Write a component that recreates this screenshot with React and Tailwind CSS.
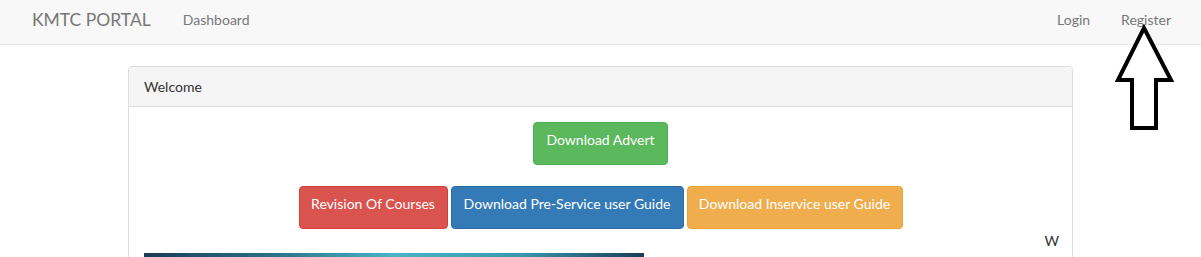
import React from 'react'

function UpArrow() {
  return (
    <svg
      className="absolute left-[1115px] top-[24px]"
      width="60"
      height="110"
      viewBox="0 0 60 110"
      fill="none"
    >
      <polygon
        points="29,4 56,56 41,56 41,104 17,104 17,56 3,56"
        stroke="#000"
        strokeWidth="4"
        strokeLinejoin="miter"
        fill="#fff"
      />
    </svg>
  )
}

export default function App() {
  return (
    <div className="relative min-h-[257px] bg-white font-['Lato','Open_Sans',sans-serif] text-[14px] text-[#333] overflow-hidden">
      {/* Navbar */}
      <nav className="h-[45px] pb-[5px] bg-[#f8f8f8] border-b border-[#e7e7e7] flex items-center">
        <a className="ml-[32px] text-[17.5px] text-[#777] leading-none">KMTC PORTAL</a>
        <a className="ml-[32px] text-[#777]">Dashboard</a>
        <div className="ml-auto flex items-center">
          <a className="text-[#777]">Login</a>
          <a className="ml-[31px] mr-[30px] text-[#777]">Register</a>
        </div>
      </nav>

      {/* Panel */}
      <div className="mt-[21px] ml-[128px] w-[945px] border border-[#ddd] rounded-[4px]">
        <div className="h-[40px] px-[15px] flex items-center bg-[#f5f5f5] border-b border-[#ddd] rounded-t-[3px]">
          Welcome
        </div>
        <div className="p-[15px] pb-0">
          <div className="flex justify-center">
            <button className="h-[43px] px-[12px] pb-[8px] bg-[#5cb85c] border border-[#4cae4c] rounded-[4px] text-white text-[14px]">
              Download Advert
            </button>
          </div>
          <div className="mt-[21px] flex justify-center gap-[3px]">
            <button className="h-[43px] w-[149px] pb-[8px] bg-[#d9534f] border border-[#d43f3a] rounded-[4px] text-white text-[14px]">
              Revision Of Courses
            </button>
            <button className="h-[43px] w-[233px] pb-[8px] bg-[#337ab7] border border-[#2e6da4] rounded-[4px] text-white text-[14px]">
              Download Pre-Service user Guide
            </button>
            <button className="h-[43px] w-[216px] pb-[8px] bg-[#f0ad4e] border border-[#eea236] rounded-[4px] text-white text-[14px]">
              Download Inservice user Guide
            </button>
          </div>
          <div className="h-[24px] flex justify-end items-end mr-[-2px]">
            <span className="text-[14px] leading-none pb-[5px]">W</span>
          </div>
          <div className="w-[500px] h-[10px] bg-[linear-gradient(90deg,#1c3b57_0%,#2b6f86_25%,#4ab3c6_50%,#3a98ae_75%,#1b3c58_100%)]" />
        </div>
      </div>

      <UpArrow />
    </div>
  )
}
